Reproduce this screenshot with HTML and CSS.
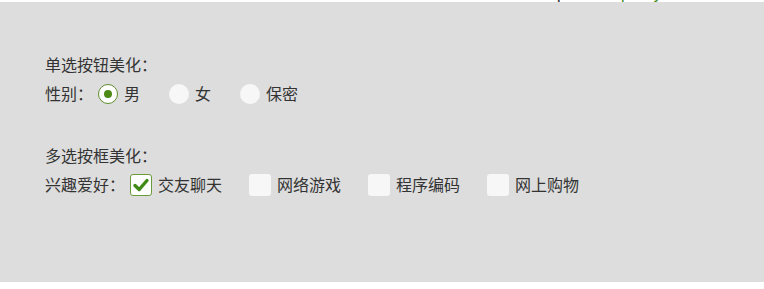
FILE: index.html
```html
<!DOCTYPE html>
<html lang="zh">
<head>
<meta charset="utf-8">
<title>单选按钮美化</title>
<link rel="stylesheet" href="styles.css">
</head>
<body>
<div class="topbar"><span class="t1">p</span><span class="t2">p</span><span class="t3">y</span></div>
<main class="panel">
  <section class="group">
    <div class="title">单选按钮美化<span class="colon">：</span></div>
    <div class="row">
      <span class="label">性别<span class="colon">：</span></span>
      <label class="radio checked"><span class="dot"></span><span class="txt">男</span></label>
      <label class="radio"><span class="dot"></span><span class="txt">女</span></label>
      <label class="radio"><span class="dot"></span><span class="txt">保密</span></label>
    </div>
  </section>
  <section class="group">
    <div class="title">多选按框美化<span class="colon">：</span></div>
    <div class="row">
      <span class="label">兴趣爱好<span class="colon">：</span></span>
      <label class="check checked"><span class="box"><svg viewBox="0 0 22 22" width="22" height="22"><path d="M5 11.5 L9.2 15.5 L17 6.5" fill="none" stroke="#3f8a17" stroke-width="3.4" stroke-linecap="round" stroke-linejoin="round"/></svg></span><span class="txt">交友聊天</span></label>
      <label class="check"><span class="box"></span><span class="txt">网络游戏</span></label>
      <label class="check"><span class="box"></span><span class="txt">程序编码</span></label>
      <label class="check"><span class="box"></span><span class="txt">网上购物</span></label>
    </div>
  </section>
</main>
</body>
</html>
```

FILE: styles.css
```css
html, body {
  margin: 0;
  padding: 0;
  background: #ffffff;
}
body {
  font-family: "Noto Sans CJK SC", "Noto Sans", sans-serif;
  font-size: 16px;
  color: #333333;
}
.colon {
  font-family: "Noto Sans CJK JP", "Noto Sans CJK SC", sans-serif;
}
.topbar {
  height: 2px;
  overflow: hidden;
  display: flex;
  font-family: "Liberation Sans", sans-serif;
  font-size: 16px;
  line-height: 16px;
}
.topbar span {
  margin-top: -14px;
  display: block;
}
.t1 { margin-left: 557px; color: #222222; }
.t2 { margin-left: 55px; color: #3a8a1a; }
.t3 { margin-left: 24px; color: #3a8a1a; }
.panel {
  background: #dddddd;
  height: 280px;
  box-sizing: border-box;
  padding: 48px 0 0 45px;
}
.group + .group {
  margin-top: 34px;
}
.title {
  height: 28px;
  line-height: 28px;
}
.row {
  height: 28px;
  display: flex;
  align-items: center;
  line-height: 28px;
  margin-top: 1px;
}
.label {
  margin-right: 5px;
}
.radio {
  display: flex;
  align-items: center;
  margin-right: 29px;
}
.radio .dot {
  width: 20px;
  height: 20px;
  border-radius: 50%;
  background: #f7f7f7;
  box-sizing: border-box;
  margin-top: 2px;
  margin-right: 6px;
  position: relative;
}
.radio.checked .dot {
  background: #ffffff;
  border: 1.5px solid #5d8f2a;
}
.radio.checked .dot::after {
  content: "";
  position: absolute;
  left: 50%;
  top: 50%;
  width: 8px;
  height: 8px;
  margin: -4px 0 0 -4px;
  border-radius: 50%;
  background: #4d8a15;
}
.check {
  display: flex;
  align-items: center;
  margin-right: 27px;
}
.check .box {
  width: 22px;
  height: 22px;
  box-sizing: border-box;
  border-radius: 3px;
  background: #f7f7f7;
  margin-top: 2px;
  margin-right: 6px;
  display: flex;
  align-items: center;
  justify-content: center;
}
.check.checked .box {
  background: #ffffff;
  border: 1.5px solid #6b9a3a;
}
.check .box svg {
  display: block;
  flex: none;
}
```
